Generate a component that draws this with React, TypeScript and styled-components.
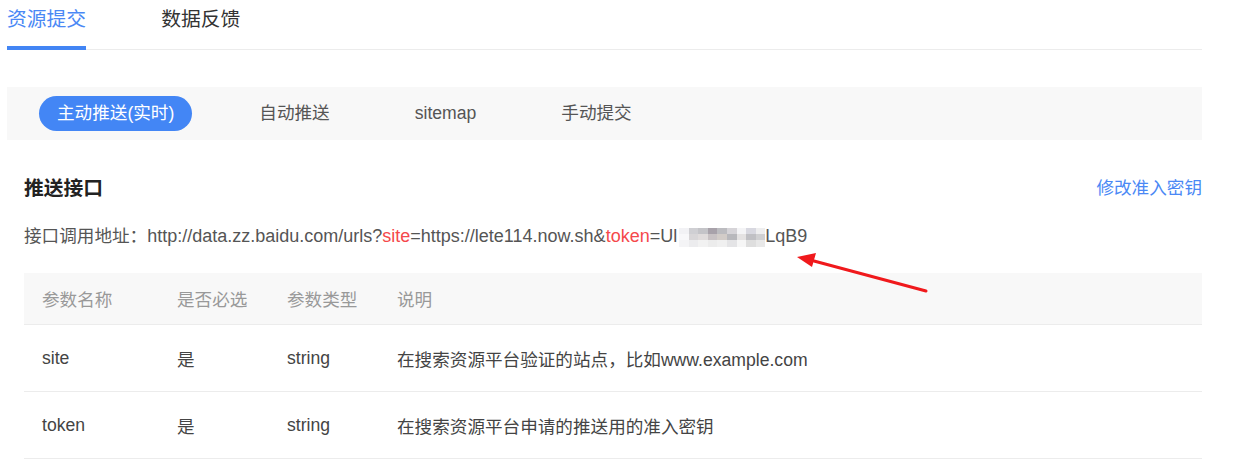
import React from "react";
import styled, { createGlobalStyle } from "styled-components";

const GlobalStyle = createGlobalStyle`
  html, body { margin: 0; padding: 0; background: #fff; }
  body {
    font-family: "Liberation Sans", "Noto Sans CJK SC", sans-serif;
    color: #333;
  }
`;

const Page = styled.div`
  position: relative;
  width: 1195px;
  margin-left: 7px;
`;

const TopNav = styled.nav`
  display: flex;
  gap: 75px;
  border-bottom: 1px solid #ececec;
`;

const TopTab = styled.div<{ $active?: boolean }>`
  box-sizing: border-box;
  height: 50px;
  padding-top: 6px;
  font-size: 19.8px;
  line-height: 26px;
  color: ${(p) => (p.$active ? "#4a88f5" : "#333")};
  border-bottom: 4px solid ${(p) => (p.$active ? "#4285f4" : "transparent")};
  margin-bottom: -1px;
`;

const SubBar = styled.div`
  margin-top: 37px;
  height: 53px;
  background: #f8f8f8;
  display: flex;
  align-items: center;
  padding-left: 32px;
  gap: 49px;
`;

const SubTab = styled.div<{ $active?: boolean }>`
  height: 35px;
  line-height: 35px;
  padding: 0 18px;
  border-radius: 18px;
  font-size: 17.6px;
  color: ${(p) => (p.$active ? "#fff" : "#555")};
  background: ${(p) => (p.$active ? "#4386f5" : "transparent")};
`;

const Section = styled.section`
  padding-left: 17px;
`;

const HeadRow = styled.div`
  margin-top: 31px;
  height: 30px;
  display: flex;
  align-items: center;
  justify-content: space-between;
`;

const Title = styled.h2`
  margin: 0;
  font-size: 19.8px;
  font-weight: bold;
  color: #222;
`;

const Link = styled.a`
  font-size: 17.6px;
  color: #4a88f5;
  text-decoration: none;
`;

const Address = styled.div`
  margin-top: 20px;
  height: 30px;
  line-height: 30px;
  font-size: 17.6px;
  color: #555;
  white-space: nowrap;
`;

const Url = styled.span`
  font-size: 18px;
`;

const Red = styled.span`
  color: #f5484b;
`;

const Mosaic = styled.span`
  display: inline-grid;
  grid-template-columns: repeat(9, 1fr);
  grid-template-rows: repeat(3, 1fr);
  grid-auto-flow: column;
  vertical-align: middle;
  height: 19px;
  width: 86px;
  margin: 0 0 0 2px;
`;

const Cell = styled.span`
  display: block;
`;

const Table = styled.div`
  margin-top: 22px;
  font-size: 17.6px;
`;

const Row = styled.div<{ $head?: boolean }>`
  display: grid;
  grid-template-columns: 135px 110px 110px 1fr;
  height: ${(p) => (p.$head ? "51px" : "66px")};
  align-items: center;
  padding-left: 18px;
  background: ${(p) => (p.$head ? "#f8f8f8" : "transparent")};
  border-bottom: 1px solid #ececec;
  color: ${(p) => (p.$head ? "#999" : "#444")};
`;

const Arrow = styled.svg`
  position: absolute;
  left: 787px;
  top: 248px;
  overflow: visible;
`;

const mosaicColors = [
  ["#f2f2f5", "#f8f8fa", "#f4f4f6"],
  ["#cfcfd3", "#d8d6d8", "#ececee"],
  ["#c4c4c8", "#e0dcdc", "#f2f2f2"],
  ["#a8a2aa", "#c8c2c4", "#ececec"],
  ["#bcbcc0", "#d2ccc8", "#f0f0f0"],
  ["#d6d4d8", "#b8b8bc", "#e4e4e6"],
  ["#f4f4f6", "#e4e2e2", "#f6f6f6"],
  ["#d8d8e0", "#c0c0c4", "#dedede"],
  ["#eeeeef", "#d0d0d2", "#e8e8e8"],
];

const rows = [
  ["site", "是", "string", "在搜索资源平台验证的站点，比如www.example.com"],
  ["token", "是", "string", "在搜索资源平台申请的推送用的准入密钥"],
];

export default function App() {
  return (
    <>
      <GlobalStyle />
      <Page>
        <TopNav>
          <TopTab $active>资源提交</TopTab>
          <TopTab>数据反馈</TopTab>
        </TopNav>
        <SubBar>
          <SubTab $active>主动推送(实时)</SubTab>
          <SubTab>自动推送</SubTab>
          <SubTab>sitemap</SubTab>
          <SubTab>手动提交</SubTab>
        </SubBar>
        <Section>
          <HeadRow>
            <Title>推送接口</Title>
            <Link>修改准入密钥</Link>
          </HeadRow>
          <Address>
            接口调用地址：
            <Url>
              http://data.zz.baidu.com/urls?<Red>site</Red>
              =https://lete114.now.sh&amp;<Red>token</Red>=Ul
              <Mosaic>
                {mosaicColors.flat().map((c, i) => (
                  <Cell key={i} style={{ background: c }} />
                ))}
              </Mosaic>
              LqB9
            </Url>
          </Address>
          <Table>
            <Row $head>
              <span>参数名称</span>
              <span>是否必选</span>
              <span>参数类型</span>
              <span>说明</span>
            </Row>
            {rows.map((r) => (
              <Row key={r[0]}>
                {r.map((c, i) => (
                  <span key={i}>{c}</span>
                ))}
              </Row>
            ))}
          </Table>
        </Section>
        <Arrow width="140" height="50" viewBox="0 0 140 50">
          <line x1="132" y1="43" x2="20" y2="13" stroke="#f0191c" strokeWidth="3" strokeLinecap="round" />
          <polygon points="3,9 22,5 18,19" fill="#f0191c" />
        </Arrow>
      </Page>
    </>
  );
}
